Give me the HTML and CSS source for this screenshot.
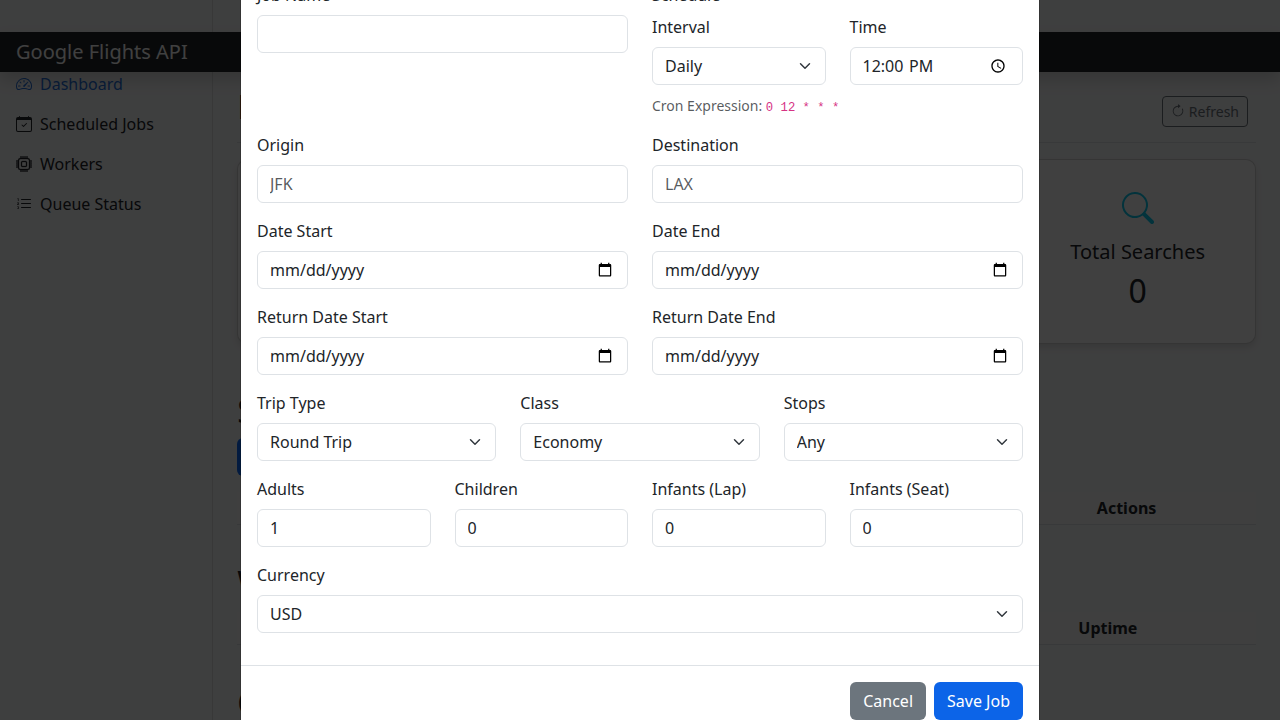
FILE: index.html
```html
<!DOCTYPE html>
<html lang="en">
<head>
<meta charset="utf-8">
<title>Google Flights API</title>
<link rel="stylesheet" href="styles.css">
</head>
<body>
<header class="navbar"><span class="brand">Google Flights API</span></header>
<div class="page">
  <nav class="sidebar">
    <a class="nav-link active"><svg viewBox="0 0 16 16"><path d="M8 4a.5.5 0 0 1 .5.5V6a.5.5 0 0 1-1 0V4.500A.5.5 0 0 1 8 4M3.732 5.732a.5.5 0 0 1 .707 0l.915.914a.5.5 0 1 1-.708.708l-.914-.915a.5.5 0 0 1 0-.707M2 10a.5.5 0 0 1 .5-.5h1.586a.5.5 0 0 1 0 1H2.500A.5.5 0 0 1 2 10m9.500 0a.5.5 0 0 1 .5-.5h1.500a.5.5 0 0 1 0 1H12a.5.5 0 0 1-.5-.5m.754-4.246a.39.39 0 0 0-.527-.02L7.547 9.310a.91.91 0 1 0 1.302 1.258l3.434-4.297a.39.39 0 0 0-.029-.518z"/><path fill-rule="evenodd" d="M0 10a8 8 0 1 1 15.547 2.661c-.442 1.253-1.845 1.602-2.932 1.250C11.309 13.488 9.475 13 8 13c-1.474 0-3.310.488-4.615.911-1.087.352-2.490.003-2.932-1.250A8 8 0 0 1 0 10m8-7a7 7 0 0 0-6.603 9.329c.203.575.923.876 1.680.630C4.397 12.533 6.358 12 8 12s3.604.532 4.923.960c.757.245 1.477-.056 1.680-.631A7 7 0 0 0 8 3"/></svg>Dashboard</a>
    <a class="nav-link"><svg viewBox="0 0 16 16"><path d="M10.854 7.146a.5.5 0 0 1 0 .708l-3 3a.5.5 0 0 1-.708 0l-1.500-1.500a.5.5 0 1 1 .708-.708L7.500 9.793l2.646-2.647a.5.5 0 0 1 .708 0"/><path d="M3.500 0a.5.5 0 0 1 .5.5V1h8V.5a.5.5 0 0 1 1 0V1h1a2 2 0 0 1 2 2v11a2 2 0 0 1-2 2H2a2 2 0 0 1-2-2V3a2 2 0 0 1 2-2h1V.5a.5.5 0 0 1 .5-.5M1 4v10a1 1 0 0 0 1 1h12a1 1 0 0 0 1-1V4z"/></svg>Scheduled Jobs</a>
    <a class="nav-link"><svg class="cpu" viewBox="0 0 16 16"><path d="M5 0a.5.5 0 0 1 .5.5V2h1V.5a.5.5 0 0 1 1 0V2h1V.5a.5.5 0 0 1 1 0V2h1V.5a.5.5 0 0 1 1 0V2A2.500 2.500 0 0 1 14 4.500h1.500a.5.5 0 0 1 0 1H14v1h1.500a.5.5 0 0 1 0 1H14v1h1.500a.5.5 0 0 1 0 1H14v1h1.500a.5.5 0 0 1 0 1H14a2.500 2.500 0 0 1-2.500 2.500v1.500a.5.5 0 0 1-1 0V14h-1v1.500a.5.5 0 0 1-1 0V14h-1v1.500a.5.5 0 0 1-1 0V14h-1v1.500a.5.5 0 0 1-1 0V14A2.500 2.500 0 0 1 2 11.500H.5a.5.5 0 0 1 0-1H2v-1H.5a.5.5 0 0 1 0-1H2v-1H.5a.5.5 0 0 1 0-1H2v-1H.5a.5.5 0 0 1 0-1H2A2.500 2.500 0 0 1 4.500 2V.5A.5.5 0 0 1 5 0m-.5 3A1.500 1.500 0 0 0 3 4.500v7A1.500 1.500 0 0 0 4.500 13h7a1.500 1.500 0 0 0 1.500-1.500v-7A1.500 1.500 0 0 0 11.500 3zM5 6.500A1.500 1.500 0 0 1 6.500 5h3A1.500 1.500 0 0 1 11 6.500v3A1.500 1.500 0 0 1 9.500 11h-3A1.500 1.500 0 0 1 5 9.500zM6.500 6a.5.5 0 0 0-.5.5v3a.5.5 0 0 0 .5.5h3a.5.5 0 0 0 .5-.5v-3a.5.5 0 0 0-.5-.5z"/></svg>Workers</a>
    <a class="nav-link"><svg viewBox="0 0 16 16"><path fill-rule="evenodd" d="M5 11.500a.5.5 0 0 1 .5-.5h9a.5.5 0 0 1 0 1h-9a.5.5 0 0 1-.5-.5m0-4a.5.5 0 0 1 .5-.5h9a.5.5 0 0 1 0 1h-9a.5.5 0 0 1-.5-.5m0-4a.5.5 0 0 1 .5-.5h9a.5.5 0 0 1 0 1h-9a.5.5 0 0 1-.5-.5"/><path d="M1.713 11.865v-.474H2c.217 0 .363-.137.363-.317 0-.185-.158-.310-.361-.310-.223 0-.367.152-.373.310h-.590c.016-.467.373-.787.986-.787.588-.002.954.291.957.703a.595.595 0 0 1-.492.594v.033a.615.615 0 0 1 .569.631c.003.533-.502.800-1.051.800-.656 0-1-.370-1.008-.794h.582c.008.178.186.306.422.309.254 0 .424-.145.422-.350-.002-.195-.155-.348-.414-.348h-.300zm-.004-4.699h-.604v-.035c0-.408.295-.844.958-.844.583 0 .960.326.960.756 0 .389-.257.617-.476.848l-.537.572v.030h1.054V9H1.143v-.395l.957-.990c.138-.142.293-.304.293-.508 0-.180-.147-.320-.342-.320a.330.330 0 0 0-.342.338zM2.564 5h-.635V2.924h-.031l-.598.420v-.567l.629-.443h.635z"/></svg>Queue Status</a>
  </nav>
  <main class="main">
    <div class="title-row"><h1>Dashboard</h1><button class="refresh"><svg viewBox="0 0 16 16"><path fill-rule="evenodd" d="M8 3a5 5 0 1 0 4.546 2.914.5.5 0 0 1 .908-.417A6 6 0 1 1 8 2z"/><path d="M8 4.466V.534a.25.25 0 0 1 .410-.192l2.360 1.966c.120.100.120.284 0 .384L8.410 4.658A.25.25 0 0 1 8 4.466"/></svg> Refresh</button></div>
    <div class="cards">
      <div class="card"></div><div class="card"></div><div class="card"></div>
      <div class="card"><svg viewBox="0 0 16 16"><path d="M11.742 10.344a6.500 6.500 0 1 0-1.397 1.398h-.001q.044.060.098.115l3.850 3.850a1 1 0 0 0 1.415-1.414l-3.850-3.850a1 1 0 0 0-.115-.100zM12 6.500a5.500 5.500 0 1 1-11 0 5.500 5.500 0 0 1 11 0"/></svg><h5>Total Searches</h5><div class="count">0</div></div>
    </div>
    <h2>Scheduled Jobs</h2>
    <button class="btn btn-primary add">New Job</button>
    <div class="thead jobs-head"><span>Name</span><span>Actions</span></div>
    <h2 class="section-title">Workers</h2>
    <div class="thead workers-head"><span>ID</span><span>Uptime</span></div>
    <h2 class="section-title">Queue Status</h2>
  </main>
</div>
<div class="backdrop"></div>
<div class="modal">
  <form class="modal-body">
    <div class="grid two">
      <div class="field"><label>Job Name</label><input class="control" type="text"></div>
      <div class="field"><label>Schedule</label>
        <div class="grid two">
          <div class="field"><label>Interval</label><select class="control select"><option>Daily</option></select></div>
          <div class="field"><label>Time</label><input class="control" type="time" value="12:00"></div>
        </div>
        <div class="cron">Cron Expression: <code>0 12 * * *</code></div>
      </div>
    </div>
    <div class="grid two">
      <div class="field"><label>Origin</label><input class="control" type="text" placeholder="JFK"></div>
      <div class="field"><label>Destination</label><input class="control" type="text" placeholder="LAX"></div>
    </div>
    <div class="grid two">
      <div class="field"><label>Date Start</label><input class="control" type="date"></div>
      <div class="field"><label>Date End</label><input class="control" type="date"></div>
    </div>
    <div class="grid two">
      <div class="field"><label>Return Date Start</label><input class="control" type="date"></div>
      <div class="field"><label>Return Date End</label><input class="control" type="date"></div>
    </div>
    <div class="grid three">
      <div class="field"><label>Trip Type</label><select class="control select"><option>Round Trip</option></select></div>
      <div class="field"><label>Class</label><select class="control select"><option>Economy</option></select></div>
      <div class="field"><label>Stops</label><select class="control select"><option>Any</option></select></div>
    </div>
    <div class="grid four">
      <div class="field"><label>Adults</label><input class="control" type="number" value="1"></div>
      <div class="field"><label>Children</label><input class="control" type="number" value="0"></div>
      <div class="field"><label>Infants (Lap)</label><input class="control" type="number" value="0"></div>
      <div class="field"><label>Infants (Seat)</label><input class="control" type="number" value="0"></div>
    </div>
    <div class="field"><label>Currency</label><select class="control select"><option>USD</option></select></div>
  </form>
  <div class="modal-footer"><button class="btn btn-secondary">Cancel</button><button class="btn btn-primary save">Save Job</button></div>
</div>
</body>
</html>
```

FILE: styles.css
```css
*, *::before, *::after { box-sizing: border-box; }
body { margin: 0; height: 720px; overflow: hidden; background: #f8f9fa; color: #212529; font: 16px/1.5 "Noto Sans", "Liberation Sans", sans-serif; }
h1, h2, h5 { margin: 0; font-weight: 500; line-height: 1.2; }
svg { fill: currentColor; }
input, select, button { font: inherit; margin: 0; }

.navbar { position: relative; z-index: 2; height: 40px; margin-top: 32px; padding: 5px 16px; background: #212529; color: #fff; box-shadow: 0 8px 16px rgba(0,0,0,.15); }
.brand { display: block; font-size: 20px; line-height: 30px; }
.page { display: grid; grid-template-columns: 213.33px 1fr; height: 720px; margin-top: -72px; }
.sidebar { padding-top: 64px; box-shadow: inset -1px 0 0 rgba(0,0,0,.1); }
.nav-link { display: flex; align-items: center; gap: 8px; height: 40px; padding: 8px 16px; color: #212529; }
.nav-link svg { width: 16px; height: 16px; }
.nav-link .cpu { stroke: currentColor; stroke-width: .3; }
.nav-link.active { color: #2470dc; }

.main { padding: 88px 24px 0; }
.title-row { display: flex; justify-content: space-between; height: 55px; padding: 0 8px 8px 0; border-bottom: 1px solid #dee2e6; }
h1 { font-size: 32px; line-height: 38px; font-weight: 400; }
.refresh { height: 31px; margin-top: 8px; padding: 4px 8px; border: 1px solid #6c757d; border-radius: 4px; background: transparent; color: #6c757d; font-size: 14px; line-height: 21px; }
.refresh svg { width: 14px; height: 14px; vertical-align: -1px; }
.cards { display: grid; grid-template-columns: repeat(4, 1fr); gap: 24px; margin-top: 16px; }
.card { height: 185px; padding: 32px 16px; text-align: center; background: #fff; border: 1px solid rgba(0,0,0,.175); border-radius: 10px; box-shadow: 0 4px 6px rgba(0,0,0,.1); }
.card svg { display: block; width: 32px; height: 32px; margin: 0 auto 16px; color: #0dcaf0; }
.card h5 { font-size: 20px; line-height: 24px; font-weight: 400; }
.count { margin-top: 8px; font-size: 32px; line-height: 38px; }
.main h2 { margin-top: 48px; font-size: 32px; line-height: 38px; font-weight: 400; }
.add { display: block; margin-top: 8px; }
.thead { display: grid; height: 33px; margin-top: 16px; padding: 4px 0 0 8px; font-weight: 700; background: #fafbfc; border-bottom: 1px solid #dee2e6; }
.jobs-head { grid-template-columns: 851.5px 1fr; }
.workers-head { grid-template-columns: 833px 1fr; margin-top: 10px; }
.main .section-title { margin-top: 39px; }

.backdrop { position: fixed; inset: 0; z-index: 3; background: rgba(0,0,0,.75); }
.modal { position: fixed; top: -17px; left: 240px; z-index: 4; width: 800px; background: #fff; background-clip: padding-box; border: 0 solid rgba(0,0,0,.175); border-width: 0 1px; }
.modal-body { display: flex; flex-direction: column; gap: 16px; height: 682px; padding: 0 16px; }
.grid { display: grid; column-gap: 24px; }
.two { grid-template-columns: repeat(2, minmax(0, 1fr)); }
.three { grid-template-columns: repeat(3, minmax(0, 1fr)); }
.four { grid-template-columns: repeat(4, minmax(0, 1fr)); }
label { display: block; margin-bottom: 8px; line-height: 24px; }
.control { display: block; width: 100%; height: 38px; padding: 6px 12px; border: 1px solid #dee2e6; border-radius: 6px; background: #fff; color: #212529; line-height: 24px; appearance: none; outline: 0; }
.control::placeholder { color: rgba(33,37,41,.75); opacity: 1; }
.control::-webkit-datetime-edit { display: block; padding: 0; }
.control::-webkit-datetime-edit-fields-wrapper,
.control::-webkit-datetime-edit-text,
.control::-webkit-datetime-edit-hour-field,
.control::-webkit-datetime-edit-minute-field,
.control::-webkit-datetime-edit-day-field,
.control::-webkit-datetime-edit-month-field,
.control::-webkit-datetime-edit-year-field { padding: 0; }
.control::-webkit-datetime-edit-ampm-field { padding: 0 1px 0 3px; }
.select { background: #fff url("data:image/svg+xml,%3csvg xmlns='http://www.w3.org/2000/svg' viewBox='0 0 16 16'%3e%3cpath fill='none' stroke='%23343a40' stroke-linecap='round' stroke-linejoin='round' stroke-width='2' d='m2 5 6 6 6-6'/%3e%3c/svg%3e") no-repeat right 12px center / 16px 12px; }
.cron { margin-top: 10px; height: 22px; font-size: 14px; line-height: 21px; color: rgba(33,37,41,.75); }
code { font: 12.25px "Liberation Mono", monospace; color: #d63384; }
.modal-footer { display: flex; justify-content: flex-end; gap: 8px; padding: 16px; border-top: 1px solid #dee2e6; }
.btn { height: 38px; padding: 6px 12px; border: 1px solid transparent; border-radius: 6px; color: #fff; line-height: 24px; }
.btn-primary { background: #0d6efd; }
.btn-secondary { background: #6c757d; }
.save { background: #0c64e8; }
```
